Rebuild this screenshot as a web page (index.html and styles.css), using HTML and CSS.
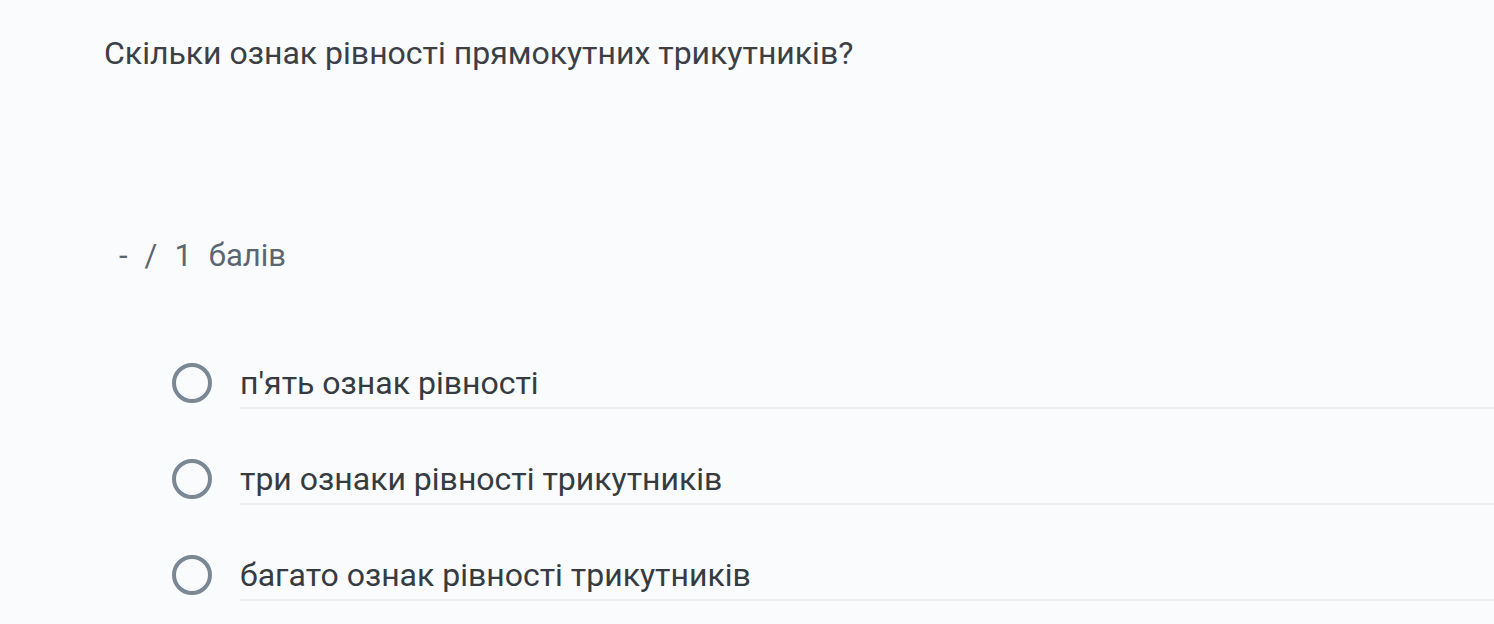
FILE: index.html
```html
<!DOCTYPE html>
<html lang="uk">
<head>
<meta charset="utf-8">
<link rel="stylesheet" href="styles.css">
</head>
<body>
<div class="page">
  <div class="question">Скільки ознак рівності прямокутних трикутників?</div>
  <div class="score"><span>-</span><span>/</span><span>1</span><span>балів</span></div>
  <div class="options">
    <div class="option"><span class="radio"></span><span class="label">п'ять ознак рівності</span></div>
    <div class="option"><span class="radio"></span><span class="label">три ознаки рівності трикутників</span></div>
    <div class="option"><span class="radio"></span><span class="label">багато ознак рівності трикутників</span></div>
  </div>
</div>
</body>
</html>
```
FILE: styles.css
```css
html, body {
  margin: 0;
  padding: 0;
  background: #f9fbfd;
}
.page {
  font-family: Roboto, "Noto Sans", sans-serif;
  padding: 33px 0 0 104px;
  height: 624px;
  box-sizing: border-box;
  overflow: hidden;
}
.question {
  font-size: 32px;
  line-height: 40px;
  color: #3b4046;
}
.score {
  margin-top: 163px;
  padding-left: 15px;
  font-size: 31px;
  line-height: 40px;
  color: #5c6670;
  display: flex;
  gap: 17px;
}
.options {
  margin-top: 87px;
  padding-left: 68px;
  display: flex;
  flex-direction: column;
  gap: 50px;
}
.option {
  display: flex;
  align-items: flex-start;
  gap: 28px;
}
.radio {
  flex: none;
  width: 40px;
  height: 40px;
  box-sizing: border-box;
  border: 4px solid #7a8895;
  border-radius: 50%;
}
.label {
  flex: 1;
  font-size: 32px;
  line-height: 40px;
  color: #363b41;
  padding-bottom: 4px;
  border-bottom: 2px solid #eceff2;
}
```
